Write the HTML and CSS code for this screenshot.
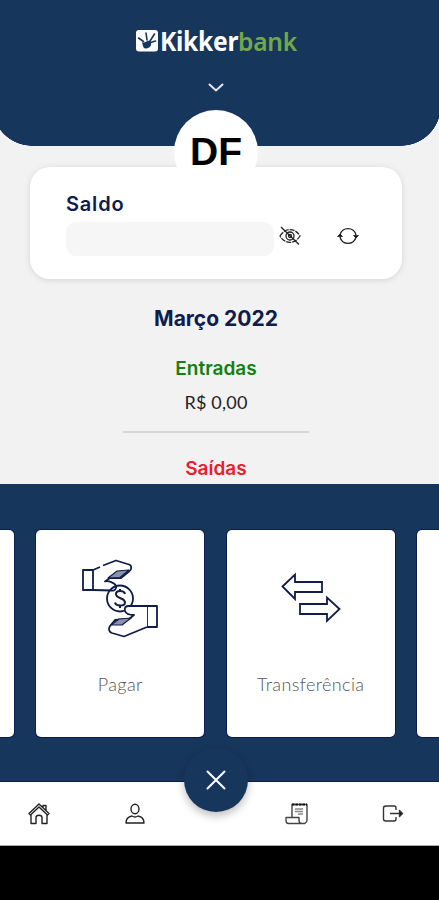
FILE: index.html
```html
<!DOCTYPE html>
<html lang="pt-BR">
<head>
    <meta charset="UTF-8">
    <meta name="viewport" content="width=device-width, initial-scale=1.0">
    <title>Kikkerbank</title>
    <link rel="stylesheet" href="styles.css">
</head>
<body>
    <header class="header">
        <div class="logo">
            <svg width="24" height="24" viewBox="0 0 24 24">
                <rect x="1" y="1" width="22" height="21.500" rx="3" fill="#fff"/>
                <path d="M3.500 9l5 3.500M11 4l1 7M19.500 5L15 12M20.500 12l-5 1.500" stroke="#17365c" stroke-width="1.600" stroke-linecap="round"/>
                <path d="M7 13c3 2 5-2 8-1 3 3 0 7.500-4 7.500-3 0-3-2.500-4-6.500z" fill="#17365c"/>
            </svg>
            <span class="logo-text">Kikker<span class="logo-green">bank</span></span>
        </div>
        <svg class="chevron" width="18" height="12" viewBox="0 0 18 12" fill="none" stroke="#e4e8f4" stroke-width="2" stroke-linecap="round">
            <path d="M2.500 2.500L9 8.500l6.500-6"/>
        </svg>
    </header>

    <main class="content">
        <section class="balance-card">
            <div class="avatar">DF</div>
            <h2 class="balance-title">Saldo</h2>
            <div class="balance-row">
                <div class="balance-value"></div>
                <svg class="icon-eye" width="24" height="20" viewBox="0 0 24 20" fill="none" stroke="#222" stroke-width="1.300">
                    <path d="M2 10c5-8.500 15-8.500 20 0-5 8.500-15 8.500-20 0z" stroke-dasharray="5 1"/>
                    <circle cx="12" cy="10" r="4"/>
                    <circle cx="12" cy="10" r="1.500"/>
                    <path d="M3 1l18 17.500"/>
                </svg>
                <svg class="icon-refresh" width="24" height="20" viewBox="0 0 24 20" fill="none" stroke="#222" stroke-width="1.400">
                    <path d="M4 9a8.200 8.200 0 0 1 16 0M20 11a8.200 8.200 0 0 1-16 0"/>
                    <path d="M1.500 10.500L4 8l2.500 2.500zM17.500 9.500L20 12l2.500-2.500z" fill="#111" stroke-width=".8"/>
                </svg>
            </div>
        </section>

        <section class="summary">
            <h3 class="month">Março 2022</h3>
            <div class="label income">Entradas</div>
            <div class="amount">R$ 0,00</div>
            <hr class="divider">
            <div class="label outcome">Saídas</div>
        </section>
    </main>

    <section class="actions">
        <div class="action-card"></div>
        <div class="action-card">
            <svg width="78" height="80" viewBox="0 0 78 80" fill="none" stroke="#101c4a" stroke-width="1.800" stroke-linejoin="round">
                <path d="M2 12h10v20H2z"/>
                <path d="M12 12l7-3M22 7.500L35 2.500l13 4c3 1 3 5 0 7l-8 6.500H29l-5 3.500c3-1 10 1 11 4.500 1 3-2 5-4 4.500L12 32"/>
                <path d="M27 20l9-7 12-1-9 7.500z" fill="#8b91aa" stroke-width="1.200"/>
                <circle cx="39" cy="40.500" r="13"/>
                <path d="M44 36c-1-4-9-4-9 0 0 5 9 3.500 9 8.500 0 4-9 4-10 0M39 31v3M39 47v3" stroke-width="2"/>
                <path d="M66 48h10v21H66z"/>
                <path d="M66 48H48c-3 0-5 1-4 5 1 3 6 4 9 4l-5 4-14 1-5 6c-2 3-1 6 2 7l12 3.500L66 69" fill="#fff"/>
                <path d="M30 67l8-6 12-1-9 7z" fill="#8b91aa" stroke-width="1.200"/>
            </svg>
            <span class="action-name">Pagar</span>
        </div>
        <div class="action-card">
            <svg width="78" height="80" viewBox="0 0 78 80" fill="none" stroke="#101c4a" stroke-width="1.800">
                <path d="M10.500 28.500L23 16.500V24h27v10H23v7z"/>
                <path d="M67.500 51L55 39.500V46H28v10h27v7z"/>
            </svg>
            <span class="action-name">Transferência</span>
        </div>
        <div class="action-card"></div>
    </section>

    <nav class="navbar">
        <svg class="nav-home" width="24" height="24" viewBox="0 0 24 24" fill="none" stroke="#222" stroke-width="1.400" stroke-linejoin="round">
            <path d="M2 11.500L12 2l10 9.500-1.500 1.500L12 5l-8.500 8zM16 5.500V3.500h3V8M4 12.500V21.500h5v-6c0-3 6-3 6 0v6h5v-9"/>
        </svg>
        <svg class="nav-user" width="24" height="24" viewBox="0 0 24 24" fill="none" stroke="#222" stroke-width="1.400" stroke-linejoin="round">
            <ellipse cx="12" cy="7" rx="4" ry="4.800"/>
            <path d="M3 21c0-4.500 3-6.500 6-7 2 1.300 4 1.300 6 0 3 .5 6 2.500 6 7z"/>
        </svg>
        <svg class="nav-bill" width="24" height="24" viewBox="0 0 24 24" fill="none" stroke="#444" stroke-width="1.400" stroke-linejoin="round">
            <path d="M7 15V2.500h15V18c0 4-4 3.500-4 3.500H4c-3 0-3-1-3-6h13v3c0 2 1 3 3 3"/>
            <path d="M7 2.500h15" stroke="#111" stroke-width="2" stroke-dasharray="2.500 1"/>
            <path d="M10 7h8M10 9.500h8M13 12h5" stroke="#888"/>
        </svg>
        <svg class="nav-exit" width="24" height="24" viewBox="0 0 24 24" fill="none" stroke="#333" stroke-width="1.400" stroke-linejoin="round">
            <path d="M15 8V6c0-1-1-2-2-2H5C3.500 4 2.500 5 2.500 6v11c0 1 1 2 2.500 2h8c1 0 2-1 2-2v-2M9 11.500h12"/>
            <path d="M18.500 8.500l3 3-3 3z" fill="#111"/>
        </svg>
        <button class="close-btn" aria-label="Fechar">
            <svg width="22" height="22" viewBox="0 0 22 22" stroke="#fff" stroke-width="2" stroke-linecap="round">
                <path d="M2.500 2.500l17 17M19.500 2.500l-17 17"/>
            </svg>
        </button>
    </nav>
</body>
</html>
```
FILE: styles.css
```css
* { box-sizing: border-box; }
body { margin: 0; height: 900px; display: flex; flex-direction: column; overflow: hidden; background: #000; font-family: Inter, "Liberation Sans", sans-serif; }
h2, h3 { margin: 0; }
svg { display: block; flex: none; }

/* header, the gradients cut the two bottom corners */
.header { height: 146px; flex: none; display: flex; flex-direction: column; align-items: center; padding: 24px 7px 0 0; background: radial-gradient(circle 40px at 32px 0, #17365c 39.500px, #f2f2f2 40px) 0 106px / 32px 40px no-repeat, radial-gradient(circle 40px at 0 0, #17365c 39.500px, #f2f2f2 40px) 100% 106px / 38px 40px no-repeat, #17365c; }
.logo { display: flex; align-items: center; height: 34px; }
.logo-text { width: 138px; font: 700 26px/34px "Noto Sans", sans-serif; letter-spacing: -0.3px; color: #fff; white-space: nowrap; transform: scaleX(0.945); transform-origin: left; margin-left: 1px; }
.logo-green { font-weight: 600; color: #70a84b; }
.chevron { margin-top: 24px; }

/* content */
.content { height: 338px; flex: none; padding: 21px 37px 0 30px; display: flex; flex-direction: column; background: #f2f2f2; }
.balance-card { position: relative; height: 112px; padding: 25px 36px 0; background: #fff; border-radius: 20px; box-shadow: 0 1px 6px rgba(0,0,0,0.12); }
.avatar { position: absolute; left: 144px; top: -57px; width: 84px; height: 84px; display: flex; align-items: center; justify-content: center; padding-bottom: 1px; background: #fff; border-radius: 50%; color: #000; font: bold 39px "Liberation Sans", sans-serif; }
.balance-title { font-size: 20px; line-height: 25px; letter-spacing: 0.8px; font-weight: 600; color: #101c4a; }
.balance-row { display: flex; align-items: center; margin-top: 5px; }
.balance-value { width: 208px; height: 34px; border-radius: 10px; background: #f6f6f6; }
.icon-eye { margin: -6px 0 0 4px; }
.icon-refresh { margin: -6px 0 0 34px; }

.summary { display: flex; flex-direction: column; align-items: center; padding-top: 27px; }
.month { font-size: 21px; line-height: 26px; font-weight: 650; color: #101c4a; }
.label { font-size: 19px; line-height: 24px; font-weight: 600; }
.income { margin-top: 25px; color: #118011; }
.amount { margin-top: 11px; font-family: Lato, sans-serif; font-size: 18px; line-height: 20px; letter-spacing: 0.2px; color: #222; }
.divider { width: 186px; height: 2px; margin: 19px 0 0; border: 0; background: #d6d6d6; }
.outcome { margin-top: 24px; color: #ea1c2d; }

/* action carousel */
.actions { height: 298px; flex: none; display: flex; justify-content: center; gap: 22.500px; overflow: hidden; padding: 46px 8px 0 0; background: #17365c; box-shadow: inset 0 -1px #0b1c50; }
.action-card { width: 168px; height: 207px; flex: none; display: flex; flex-direction: column; align-items: center; padding-top: 28px; background: #fff; border-radius: 5px; box-shadow: 0 0 0 1px #0b1c50; }
.action-name { margin-top: 35px; font-family: Lato, sans-serif; font-size: 18px; line-height: 22px; letter-spacing: 0.4px; font-weight: 300; color: #555; }

/* bottom bar */
.navbar { position: relative; height: 64px; flex: none; display: flex; align-items: center; padding-left: 27px; background: #fff; border-bottom: 1px solid #aaa; }
.nav-user { margin-left: 72px; }
.nav-bill { margin-left: 138px; }
.nav-exit { margin-left: 72px; }
.close-btn { position: absolute; left: 184px; top: -34px; width: 64px; height: 64px; display: flex; align-items: center; justify-content: center; padding: 0; border: none; border-radius: 50%; background: #17365c; box-shadow: 0 4px 8px rgba(0,0,0,0.25); }
```
